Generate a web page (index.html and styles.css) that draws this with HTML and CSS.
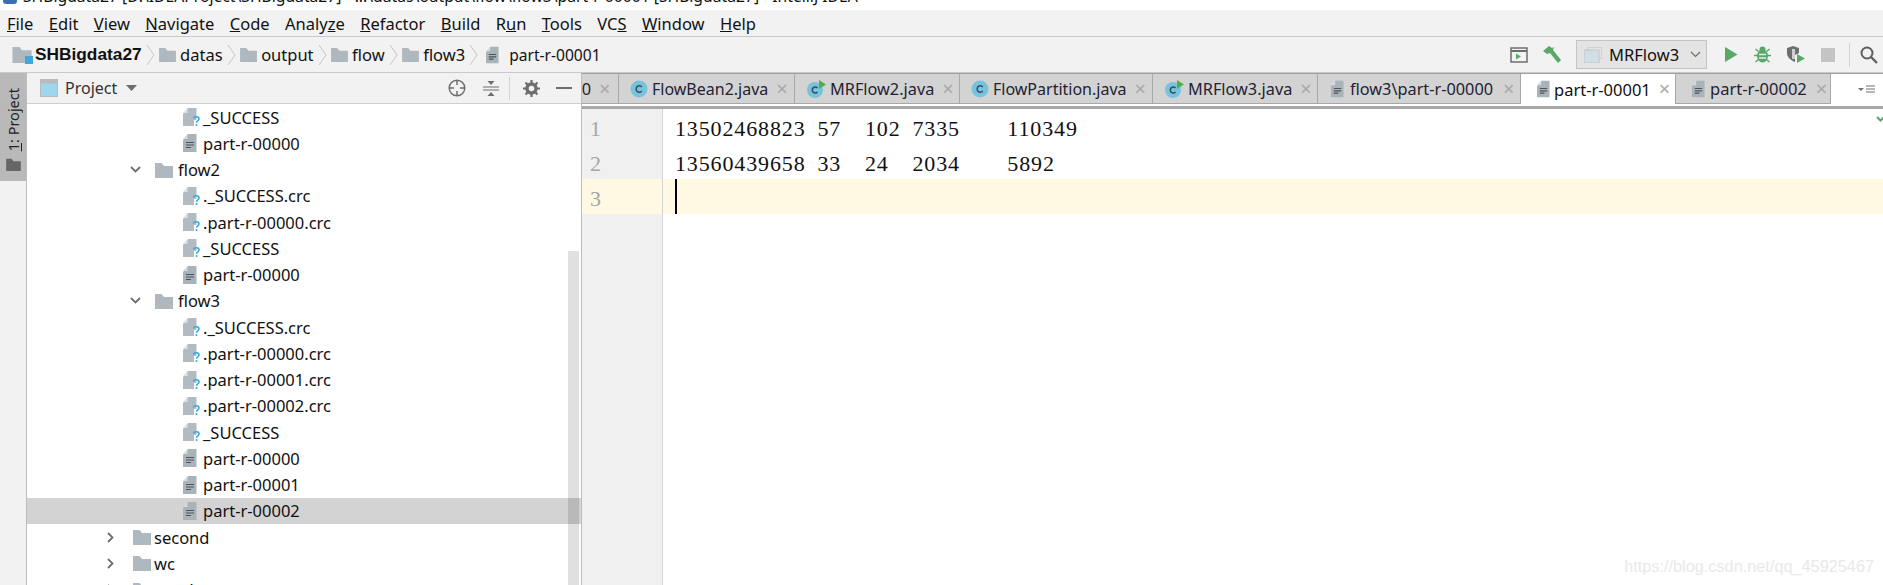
FILE: index.html
```html
<!DOCTYPE html>
<html lang="en">
<head>
<meta charset="utf-8">
<title>SHBigdata27</title>
<link rel="stylesheet" href="styles.css">
</head>
<body>
<svg class="defs" width="0" height="0" aria-hidden="true">
  <defs>
    <symbol id="i-folder" viewBox="0 0 18 16"><path d="M0 1h6.500l2.500 3h9v12H0z" fill="#afb8bf"/></symbol>
    <symbol id="i-chev" viewBox="0 0 9 20"><path d="M1 0l7 10-7 10" fill="none" stroke="#c6c6c6" stroke-width="1"/></symbol>
    <symbol id="i-text" viewBox="0 0 14 18"><path d="M0 6 5 0h8.500v18H0z" fill="#a9b3ba"/><path d="M0 5 4.500 0v5z" fill="#d5dade"/><path d="M3 8.500h8M3 11h8M3 13.500h5" stroke="#4f5458" stroke-width="1.200"/></symbol>
    <symbol id="i-unknown" viewBox="0 0 18 18"><path d="M0 6 5 0h8.500v12H11v6H0z" fill="#b2bbc1"/><path d="M0 5 4.500 0v5z" fill="#dde1e4"/><path d="M10.500 10.500c.5-2.500 5.500-2.500 5.500.5 0 2-2.500 1.800-2.500 3.700" fill="none" stroke="#35a9e0" stroke-width="1.600"/><circle cx="13.500" cy="17" r="1" fill="#35a9e0"/></symbol>
    <symbol id="i-class" viewBox="0 0 18 18"><circle cx="9" cy="9" r="8.500" fill="#77c3dd"/><path d="M11.800 7A3.200 3.200 0 1 0 11.800 11" fill="none" stroke="#35505c" stroke-width="1.500"/></symbol>
    <symbol id="i-run-class" viewBox="0 0 20 18"><circle cx="9" cy="10" r="8" fill="#77c3dd"/><path d="M11.500 8A3 3 0 1 0 11.500 12" fill="none" stroke="#35505c" stroke-width="1.500"/><path d="M13 0l7 4.500-7 4.500z" fill="#52b043"/></symbol>
  </defs>
</svg>

<div class="title-bar"><span class="title-icon"></span><span class="title-text">SHBigdata27 [D:\IDEAProject\SHBigdata27] - ...\datas\output\flow\flow3\part-r-00001 [SHBigdata27] - IntelliJ IDEA</span></div>

<nav class="menu-bar">
  <span><u>F</u>ile</span><span><u>E</u>dit</span><span><u>V</u>iew</span><span><u>N</u>avigate</span><span><u>C</u>ode</span><span>Analy<u>z</u>e</span><span><u>R</u>efactor</span><span><u>B</u>uild</span><span>R<u>u</u>n</span><span><u>T</u>ools</span><span>VC<u>S</u></span><span><u>W</u>indow</span><span><u>H</u>elp</span>
</nav>

<header class="nav-bar">
  <div class="crumbs">
    <span class="crumb strong"><span class="module-icon"><svg width="20" height="17"><use href="#i-folder"/></svg><i></i></span>SHBigdata27</span>
    <svg class="sep" width="9" height="20"><use href="#i-chev"/></svg>
    <span class="crumb"><svg class="fld" width="17" height="15"><use href="#i-folder"/></svg>datas</span>
    <svg class="sep" width="9" height="20"><use href="#i-chev"/></svg>
    <span class="crumb"><svg class="fld" width="17" height="15"><use href="#i-folder"/></svg>output</span>
    <svg class="sep" width="9" height="20"><use href="#i-chev"/></svg>
    <span class="crumb"><svg class="fld" width="17" height="15"><use href="#i-folder"/></svg>flow</span>
    <svg class="sep" width="9" height="20"><use href="#i-chev"/></svg>
    <span class="crumb"><svg class="fld" width="17" height="15"><use href="#i-folder"/></svg>flow3</span>
    <svg class="sep" width="9" height="20"><use href="#i-chev"/></svg>
    <span class="crumb file"><svg width="13" height="18"><use href="#i-text"/></svg>part-r-00001</span>
  </div>
  <div class="tools">
    <svg class="t-console" width="18" height="16" viewBox="0 0 18 16"><rect x="1" y="1" width="16" height="14" fill="none" stroke="#6e6e6e" stroke-width="1.500"/><path d="M1 4h16" stroke="#6e6e6e" stroke-width="2"/><path d="M6 6.500l5 3-5 3z" fill="#59a869"/></svg>
    <svg class="t-hammer" width="20" height="20" viewBox="0 0 20 20"><path d="M1 6 7 1l3 2 2-1-1 3 8 10-3 3-8-10-3 1z" fill="#59a869"/></svg>
    <div class="run-config"><svg width="18" height="16" viewBox="0 0 18 16"><rect x="3.500" y="0.500" width="14" height="11" fill="none" stroke="#d0d0d0"/><rect x="0" y="3" width="15" height="13" fill="#cfdfe5" stroke="#c4c4c4"/></svg><span>MRFlow3</span><svg class="chev" width="11" height="7" viewBox="0 0 11 7"><path d="M1 1l4.500 4.500L10 1" fill="none" stroke="#6e6e6e" stroke-width="1.200"/></svg></div>
    <svg class="t-run" width="14" height="15" viewBox="0 0 14 15"><path d="M1 0l12.500 7.500L1 15z" fill="#59a869"/></svg>
    <svg class="t-debug" width="17" height="17" viewBox="0 0 17 17"><path d="M1.500 3l3 2.500M15.500 3l-3 2.500M0 9.500h3M14 9.500h3M1.500 16l3-2.500M15.500 16l-3-2.500" stroke="#59a869" stroke-width="1.500"/><circle cx="8.500" cy="3.500" r="3" fill="#59a869"/><ellipse cx="8.500" cy="10" rx="5.500" ry="6.500" fill="#59a869"/><path d="M5 8.500h7M5 12h7" stroke="#e4efe6" stroke-width="1.300"/></svg>
    <svg class="t-cover" width="19" height="17" viewBox="0 0 19 17"><path d="M0 2l6-2 6 2v5l-4 2v7C3 14 0 11 0 7z" fill="#6e6e6e"/><path d="M5 3h3v10H5z" fill="#cfcfcf"/><path d="M10 8l8 4.500L10 17z" fill="#59a869"/></svg>
    <span class="t-stop"></span>
    <span class="t-div"></span>
    <svg class="t-search" width="18" height="18" viewBox="0 0 18 18"><circle cx="7" cy="7" r="5.500" fill="none" stroke="#5f5f5f" stroke-width="2"/><path d="M11 11l6 6" stroke="#5f5f5f" stroke-width="2.400"/></svg>
  </div>
</header>

<main class="workspace">
  <aside class="stripe"><div class="stripe-tab"><span class="stripe-label"><u>1</u>: Project</span><svg width="15" height="13" viewBox="0 0 18 16"><path d="M0 1h6.500l2.500 3h9v12H0z" fill="#666"/></svg></div></aside>

  <section class="project">
    <div class="panel-head">
      <svg width="18" height="18" viewBox="0 0 18 18"><rect x="0.500" y="0.500" width="17" height="17" fill="#9ed6ee" stroke="#b5bbbf"/><path d="M0 2.500h18" stroke="#b5bbbf" stroke-width="4"/></svg>
      <span class="panel-title">Project</span>
      <svg class="caret" width="11" height="6" viewBox="0 0 11 6"><path d="M0 0h11L5.500 6z" fill="#6e6e6e"/></svg>
      <div class="panel-tools">
        <svg class="pt-target" width="18" height="18" viewBox="0 0 18 18"><circle cx="9" cy="9" r="7.800" fill="none" stroke="#6e6e6e" stroke-width="1.500"/><path d="M9 1v5M9 12v5M1 9h5M12 9h5" stroke="#6e6e6e" stroke-width="1.500"/></svg>
        <svg class="pt-collapse" width="16" height="17" viewBox="0 0 16 17"><path d="M0 7h16M0 10h16" stroke="#6e6e6e" stroke-width="1.200"/><path d="M4.500 1h7L8 5zM4.500 16h7L8 12z" fill="#6e6e6e"/></svg>
        <span class="head-div"></span>
        <svg class="pt-gear" width="17" height="17" viewBox="0 0 17 17"><circle cx="8.500" cy="8.500" r="4.500" fill="none" stroke="#6e6e6e" stroke-width="3.400"/><path d="M8.500 0v3.500M8.500 13.500V17M0 8.500h3.500M13.500 8.500H17M2.500 2.500l2.500 2.500M12 12l2.500 2.500M2.500 14.500L5 12M12 5l2.500-2.500" stroke="#6e6e6e" stroke-width="2.200"/></svg>
        <span class="minus"></span>
      </div>
    </div>
    <div class="tree">
      <div class="row d3"><svg width="18" height="18"><use href="#i-unknown"/></svg>_SUCCESS</div>
      <div class="row d3"><svg width="14" height="18"><use href="#i-text"/></svg>part-r-00000</div>
      <div class="row d2 folder"><svg class="arrow" width="11" height="7" viewBox="0 0 11 7"><path d="M1 1l4.500 4.500L10 1" fill="none" stroke="#6e6e6e" stroke-width="1.800"/></svg><svg width="18" height="16"><use href="#i-folder"/></svg>flow2</div>
      <div class="row d3"><svg width="18" height="18"><use href="#i-unknown"/></svg>._SUCCESS.crc</div>
      <div class="row d3"><svg width="18" height="18"><use href="#i-unknown"/></svg>.part-r-00000.crc</div>
      <div class="row d3"><svg width="18" height="18"><use href="#i-unknown"/></svg>_SUCCESS</div>
      <div class="row d3"><svg width="14" height="18"><use href="#i-text"/></svg>part-r-00000</div>
      <div class="row d2 folder"><svg class="arrow" width="11" height="7" viewBox="0 0 11 7"><path d="M1 1l4.500 4.500L10 1" fill="none" stroke="#6e6e6e" stroke-width="1.800"/></svg><svg width="18" height="16"><use href="#i-folder"/></svg>flow3</div>
      <div class="row d3"><svg width="18" height="18"><use href="#i-unknown"/></svg>._SUCCESS.crc</div>
      <div class="row d3"><svg width="18" height="18"><use href="#i-unknown"/></svg>.part-r-00000.crc</div>
      <div class="row d3"><svg width="18" height="18"><use href="#i-unknown"/></svg>.part-r-00001.crc</div>
      <div class="row d3"><svg width="18" height="18"><use href="#i-unknown"/></svg>.part-r-00002.crc</div>
      <div class="row d3"><svg width="18" height="18"><use href="#i-unknown"/></svg>_SUCCESS</div>
      <div class="row d3"><svg width="14" height="18"><use href="#i-text"/></svg>part-r-00000</div>
      <div class="row d3"><svg width="14" height="18"><use href="#i-text"/></svg>part-r-00001</div>
      <div class="row d3 selected"><svg width="14" height="18"><use href="#i-text"/></svg>part-r-00002</div>
      <div class="row d1 folder"><svg class="arrow" width="7" height="11" viewBox="0 0 7 11"><path d="M1 1l4.500 4.500L1 10" fill="none" stroke="#6e6e6e" stroke-width="1.800"/></svg><svg width="18" height="16"><use href="#i-folder"/></svg>second</div>
      <div class="row d1 folder"><svg class="arrow" width="7" height="11" viewBox="0 0 7 11"><path d="M1 1l4.500 4.500L1 10" fill="none" stroke="#6e6e6e" stroke-width="1.800"/></svg><svg width="18" height="16"><use href="#i-folder"/></svg>wc</div>
      <div class="row d1 folder"><svg class="arrow" width="7" height="11" viewBox="0 0 7 11"><path d="M1 1l4.500 4.500L1 10" fill="none" stroke="#6e6e6e" stroke-width="1.800"/></svg><svg width="18" height="16"><use href="#i-folder"/></svg>wordcount</div>
      <div class="scrollbar"></div>
    </div>
  </section>

  <section class="editor">
    <div class="tabs">
      <div class="tab t0"><span class="clip">00</span><b>×</b></div>
      <div class="tab t1"><svg width="18" height="18"><use href="#i-class"/></svg><span>FlowBean2.java</span><b>×</b></div>
      <div class="tab t2"><svg width="20" height="18"><use href="#i-run-class"/></svg><span>MRFlow2.java</span><b>×</b></div>
      <div class="tab t3"><svg width="18" height="18"><use href="#i-class"/></svg><span>FlowPartition.java</span><b>×</b></div>
      <div class="tab t4"><svg width="20" height="18"><use href="#i-run-class"/></svg><span>MRFlow3.java</span><b>×</b></div>
      <div class="tab t5"><svg width="13" height="18"><use href="#i-text"/></svg><span>flow3\part-r-00000</span><b>×</b></div>
      <div class="tab t6 active"><svg width="13" height="18"><use href="#i-text"/></svg><span>part-r-00001</span><b>×</b></div>
      <div class="tab t7"><svg width="13" height="18"><use href="#i-text"/></svg><span>part-r-00002</span><b>×</b></div>
      <div class="tab-rest"><svg width="22" height="9" viewBox="0 0 22 9"><path d="M0 3h6L3 6z" fill="#6e6e6e"/><path d="M8 1h9M8 4h9M8 7h9" stroke="#6e6e6e" stroke-width="1.200"/></svg></div>
    </div>
    <div class="tab-gap"></div>
    <div class="code">
      <div class="gutter"><div>1</div><div>2</div><div class="cur">3</div></div>
      <div class="lines">
        <div class="line">13502468823 57  102 7335    110349</div>
        <div class="line">13560439658 33  24  2034    5892</div>
        <div class="line current"><span class="caret-bar"></span></div>
        <svg class="check" width="12" height="9" viewBox="0 0 12 9"><path d="M1 4l3.500 3.500L11 1" fill="none" stroke="#59a869" stroke-width="2"/></svg>
        <span class="watermark">https://blog.csdn.net/qq_45925467</span>
      </div>
    </div>
  </section>
</main>
</body>
</html>
```
FILE: styles.css
```css
* { box-sizing: border-box; }
html, body { margin: 0; height: 585px; overflow: hidden; }
body { background: #fff; color: #111; font-family: "Noto Sans", "Liberation Sans", sans-serif; font-size: 17px; display: flex; flex-direction: column; width: 1883px; }
.defs { position: absolute; }

.title-bar { height: 10px; background: #fff; overflow: hidden; display: flex; align-items: flex-start; padding-left: 3px; flex: none; }
.title-icon { width: 14px; height: 4px; background: #3b6fb5; margin-right: 6px; border-radius: 0 0 3px 3px; flex: none; }
.title-text { font-size: 15.700px; line-height: 17px; white-space: nowrap; margin-top: -12px; }

.menu-bar { height: 27px; background: #f2f2f2; border-bottom: 1px solid #c9c9c9; display: flex; gap: 15.400px; padding-left: 7px; align-items: center; flex: none; font-size: 16.500px; }
.nav-bar { height: 36px; background: #f2f2f2; border-bottom: 1px solid #c9c9c9; display: flex; justify-content: space-between; align-items: center; flex: none; }
.crumbs { display: flex; align-items: center; padding-left: 12px; font-size: 16.500px; }
.crumb { display: flex; align-items: center; gap: 4.500px; }
.crumb.strong { font-weight: 700; font-family: "Liberation Sans", sans-serif; font-size: 17.300px; gap: 3px; }
.crumb.file { gap: 10px; margin-left: 4px; font-size: 15.600px; }
.module-icon { position: relative; display: block; width: 20px; height: 17px; }
.module-icon svg { display: block; }
.module-icon i { position: absolute; right: -1px; bottom: -1px; width: 8px; height: 8px; background: #3ea8de; }
.sep { margin: 0 4px; flex: none; }
.tools { display: flex; align-items: center; }
.t-hammer { margin-left: 14px; }
.run-config { width: 131px; height: 29px; margin-left: 14px; background: #e4e4e4; border: 1.500px solid #c4c4c4; display: flex; align-items: center; padding-left: 7px; gap: 7px; font-size: 16.500px; }
.run-config .chev { margin-left: 4px; }
.t-run { margin-left: 17px; }
.t-debug { margin-left: 16px; }
.t-cover { margin-left: 16px; }
.t-stop { width: 14px; height: 14px; background: #c4c4c4; margin-left: 15px; }
.t-div { width: 1px; height: 24px; background: #d2d2d2; margin-left: 14px; }
.t-search { margin: 0 5px 0 10px; }

.workspace { flex: 1; display: flex; min-height: 0; }
.stripe { width: 27px; background: #f2f2f2; border-right: 1px solid #bdbdbd; flex: none; }
.stripe-tab { height: 108px; background: #b9b9b9; display: flex; flex-direction: column; align-items: center; padding-top: 15px; gap: 7px; color: #222; font-size: 14.500px; }
.stripe-label { writing-mode: vertical-rl; transform: rotate(180deg); line-height: 16px; }

.project { width: 554px; display: flex; flex-direction: column; flex: none; }
.panel-head { height: 31px; background: #f2f2f2; border-bottom: 1px solid #cfcfcf; display: flex; align-items: center; padding-left: 13px; flex: none; }
.panel-title { margin-left: 7px; font-size: 16px; color: #333; }
.caret { margin-left: 9px; }
.panel-tools { margin-left: auto; display: flex; align-items: center; padding-right: 9px; }
.pt-collapse { margin-left: 17px; }
.head-div { width: 1px; height: 23px; background: #d2d2d2; margin-left: 10px; }
.pt-gear { margin-left: 13px; }
.minus { width: 16px; height: 2px; background: #6e6e6e; margin-left: 16px; }

.tree { position: relative; flex: 1; overflow: hidden; background: #fff; }
.row { height: 26.250px; display: flex; align-items: center; gap: 2px; white-space: nowrap; font-size: 16.500px; }
.row svg { flex: none; }
.d3 { padding-left: 156px; }
.d3 svg[width="14"] { margin-right: 4px; }
.d2 { padding-left: 103px; }
.d2 .arrow { margin-right: 12px; }
.d2 svg:not(.arrow) { margin-right: 3px; }
.d1 { padding-left: 80px; }
.d1 .arrow { margin-right: 17px; }
.d1 svg:not(.arrow) { margin-right: 1px; }
.selected { background: #d3d3d3; }
.scrollbar { position: absolute; right: 2px; top: 147px; bottom: 0; width: 11px; background: rgba(0,0,0,.12); }

.editor { flex: 1; min-width: 0; display: flex; flex-direction: column; border-left: 1px solid #bdbdbd; }
.tabs { height: 31px; display: flex; background: #fff; flex: none; border-top: 1px solid #9f9f9f; }
.tab { background: #d3d3d3; border-right: 1.500px solid #a8a8a8; border-bottom: 1.500px solid #a8a8a8; display: flex; align-items: center; white-space: nowrap; overflow: hidden; font-size: 16.300px; color: #223; flex: none; padding-left: 11px; gap: 4px; }
.tab b { font-weight: 400; color: #a8a8a8; font-size: 20px; line-height: 1; margin-left: 4px; }
.tab.active { background: #fff; border-bottom: 0; color: #111; }
.t0 { width: 37px; padding-left: 0; }
.t1 { width: 176px; font-size: 16px; }
.t2 { width: 165px; }
.t3 { width: 193px; font-size: 16px; }
.t4 { width: 165px; }
.t5 { width: 203px; gap: 6px; padding-left: 13px; }
.t6 { width: 155px; padding-left: 16px; gap: 4px; font-size: 16.500px; }
.t7 { width: 155px; padding-left: 16px; gap: 5px; font-size: 16.500px; }
.t0 .clip { width: 9px; overflow: hidden; direction: rtl; flex: none; }
.tab-rest { flex: 1; display: flex; align-items: center; justify-content: flex-end; padding-right: 3px; }
.tab-gap { height: 5px; border-bottom: 3px solid #a8a8a8; flex: none; }
.code { flex: 1; display: flex; min-height: 0; }
.gutter { width: 81px; background: #f0f0f0; border-right: 1px solid #d4d4d4; flex: none; font-family: "Liberation Serif", serif; font-size: 22px; color: #a6a6a6; }
.gutter div { height: 35px; line-height: 40px; padding-left: 8px; }
.gutter .cur { background: #fff8e2; }
.lines { flex: 1; position: relative; overflow: hidden; font-family: "Liberation Serif", serif; font-size: 22px; letter-spacing: .87px; word-spacing: 5.500px; color: #111; }
.line { height: 35px; line-height: 40px; padding-left: 12px; white-space: pre; }
.line.current { background: #fff8e2; }
.caret-bar { display: block; width: 2px; height: 35px; background: #000; }
.check { position: absolute; right: -5px; top: 4px; }
.watermark { position: absolute; right: 9px; bottom: 9px; font-family: "Liberation Sans", sans-serif; font-size: 16.300px; letter-spacing: 0; word-spacing: 0; color: #e9e9e9; }
```
